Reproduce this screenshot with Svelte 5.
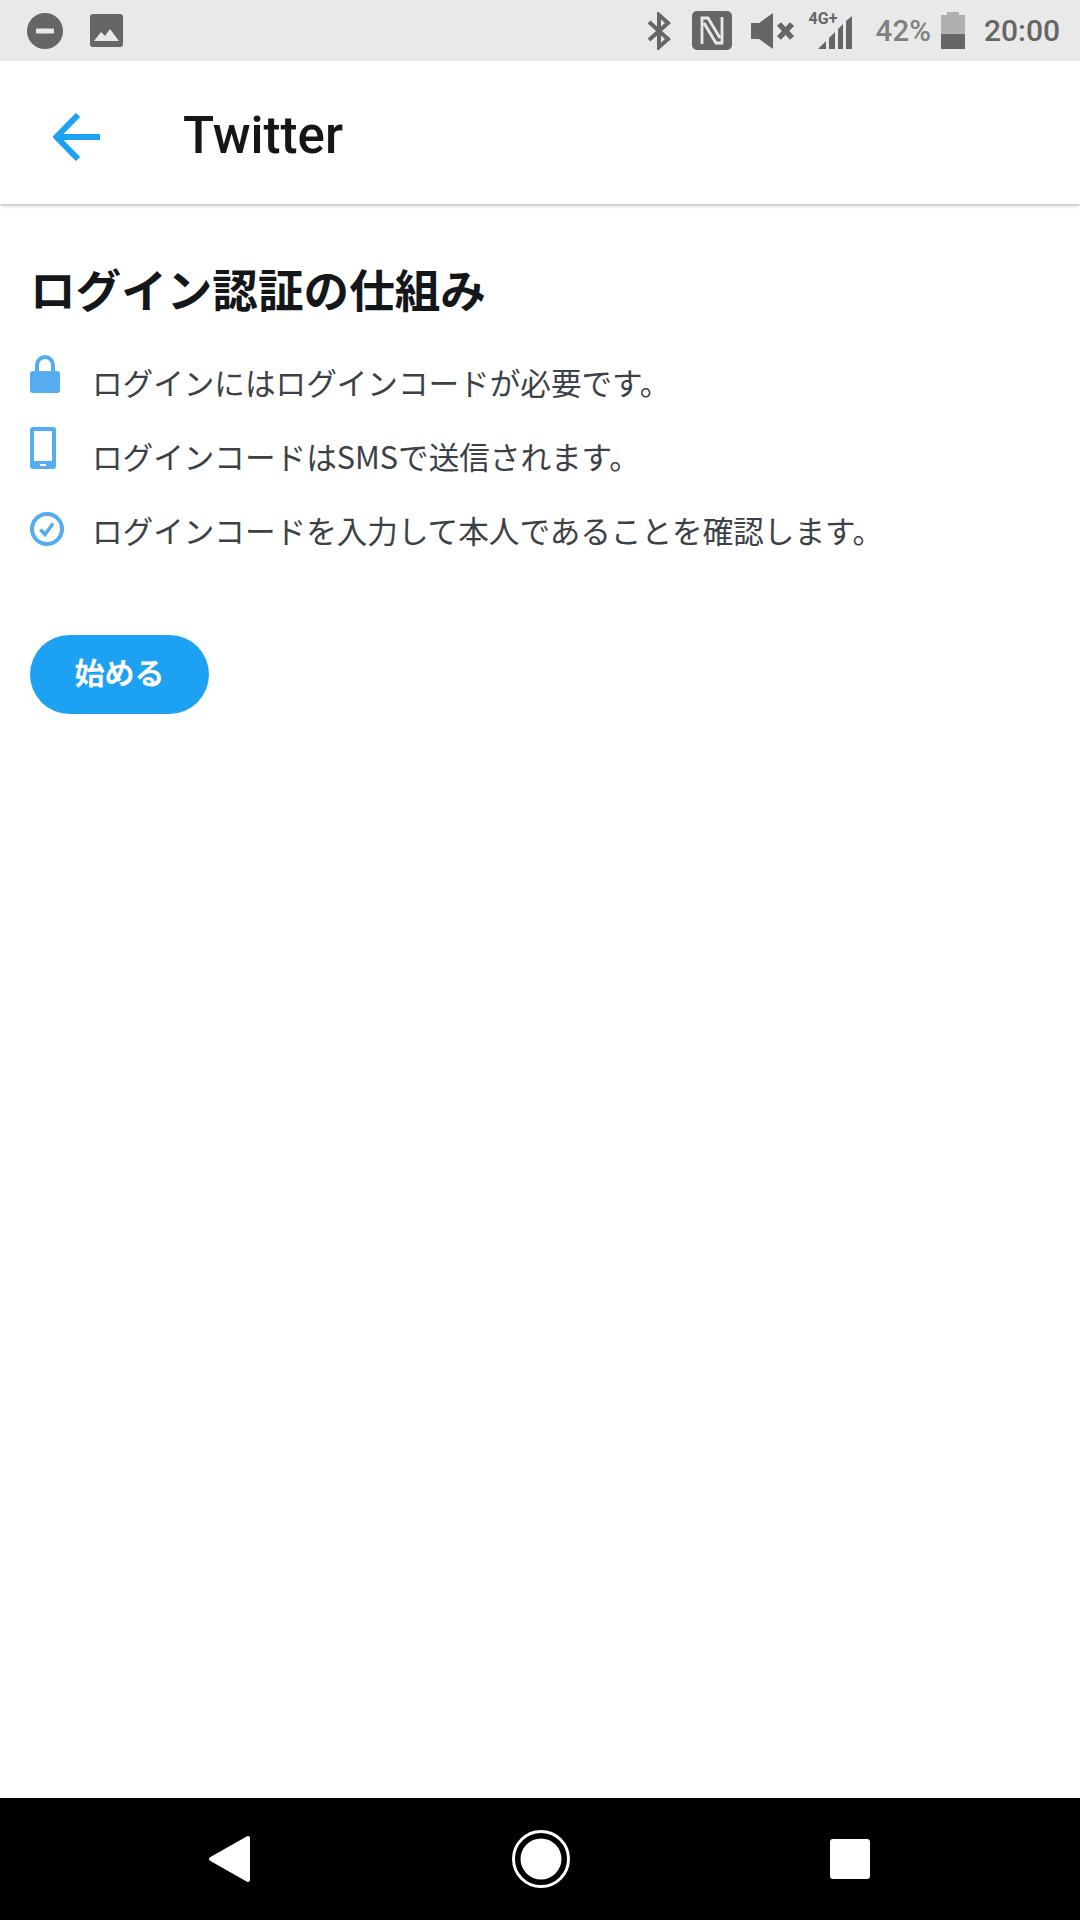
<script lang="ts">
  const steps = [
    { icon: 'lock', text: 'ログインにはログインコードが必要です。' },
    { icon: 'phone', text: 'ログインコードはSMSで送信されます。' },
    { icon: 'check', text: 'ログインコードを入力して本人であることを確認します。' }
  ];
</script>

<div class="screen">
  <div class="status">
    <div class="status-left">
      <svg width="36" height="36" viewBox="0 0 36 36"><circle cx="18" cy="18" r="18" fill="#666" /><rect x="9" y="15.5" width="18" height="5" rx="1" fill="#e9e9e9" /></svg>
      <svg width="33" height="33" viewBox="0 0 33 33"><rect width="33" height="33" rx="3" fill="#666" /><path d="M4 27 L11 18 L15 22 L20 15 L29 27Z" fill="#e9e9e9" /></svg>
    </div>
    <div class="status-right">
      <svg class="bt" width="24" height="38" viewBox="0 0 24 38" fill="none" stroke="#666" stroke-width="4"><path d="M2 10 L21 27 L12 35 V3 L21 11 L2 28" /></svg>
      <svg class="nfc" width="40" height="39" viewBox="0 0 40 39"><rect width="40" height="39" rx="5" fill="#666" /><path d="M10 33 V7 H16 L28 27 M30 6 V32 H24 L12 12" fill="none" stroke="#e9e9e9" stroke-width="2.8" /></svg>
      <svg class="sound" width="43" height="36" viewBox="0 0 43 36"><path d="M0 10 H8 L22 0 V36 L8 26 H0Z" fill="#666" /><path d="M28 11 L41 25 M41 11 L28 25" stroke="#666" stroke-width="5.500" /></svg>
      <div class="signal">
        <span class="net">4G+</span>
        <svg width="34" height="33" viewBox="0 0 34 33"><path d="M0 33 L8 25 V33Z M11 33 V22 L17 16 V33Z M20 33 V13 L25 8 V33Z M28 33 V5 L34 0 V33Z" fill="#666" /></svg>
      </div>
      <span class="percent">42%</span>
      <div class="battery"><span class="cap"></span><span class="cell"><span class="level"></span></span></div>
      <span class="clock">20:00</span>
    </div>
  </div>

  <header class="topbar">
    <svg class="back" width="48" height="48" viewBox="0 0 48 48" fill="none" stroke="#1da1f2" stroke-width="6"><path d="M47 24 H3 M25 2 L3.500 24 L25 46" /></svg>
    <h1>Twitter</h1>
  </header>

  <main class="content">
    <h2>ログイン認証の仕組み</h2>
    <ul>
      {#each steps as step}
        <li>
          <span class="icon {step.icon}">
            {#if step.icon === 'lock'}
              <svg width="30" height="38" viewBox="0 0 30 38"><path d="M7 18 V10 a8 8 0 0 1 16 0 V18" fill="none" stroke="#55acee" stroke-width="4" /><rect y="16" width="30" height="22" rx="3" fill="#55acee" /></svg>
            {:else if step.icon === 'phone'}
              <svg width="26" height="42" viewBox="0 0 26 42"><path fill-rule="evenodd" d="M3 0 H23 a3 3 0 0 1 3 3 V39 a3 3 0 0 1 -3 3 H3 a3 3 0 0 1 -3 -3 V3 a3 3 0 0 1 3 -3Z M4 4 V34 H22 V4Z M10 37 V39 H16 V37Z" fill="#55acee" /></svg>
            {:else}
              <svg width="34" height="34" viewBox="0 0 34 34" fill="none" stroke="#55acee"><circle cx="17" cy="17" r="15" stroke-width="4" /><path d="M10.500 17.500 L15 22.500 L23 11.500" stroke-width="3.500" /></svg>
            {/if}
          </span>
          <span class="label">{step.text}</span>
        </li>
      {/each}
    </ul>
    <button>始める</button>
  </main>

  <nav class="navbar">
    <svg width="44" height="48" viewBox="0 0 44 48"><path d="M41 3 V45 L4 24Z" fill="#fff" stroke="#fff" stroke-width="4" stroke-linejoin="round" /></svg>
    <svg width="58" height="58" viewBox="0 0 58 58"><circle cx="29" cy="29" r="27.500" fill="none" stroke="#fff" stroke-width="3" /><circle cx="29" cy="29" r="20.500" fill="#fff" /></svg>
    <span class="square"></span>
  </nav>
</div>

<style>
  :global(body) {
    margin: 0;
    background: #fff;
  }

  .screen {
    width: 1080px;
    height: 1920px;
    display: flex;
    flex-direction: column;
    font-family: 'Noto Sans CJK JP', sans-serif;
    overflow: hidden;
  }

  .status {
    height: 61px;
    flex: none;
    background: #e9e9e9;
    display: flex;
    align-items: center;
    justify-content: space-between;
    padding: 0 20px 0 27px;
    font-family: Roboto, sans-serif;
    position: relative;
    z-index: 1;
  }

  .status-left {
    display: flex;
    align-items: center;
    gap: 27px;
  }

  .status-right {
    display: flex;
    align-items: center;
  }

  .bt { margin-right: 21px; }
  .nfc { margin-right: 19px; }
  .sound { margin-right: 15px; }

  .signal {
    position: relative;
    width: 43px;
    height: 36px;
    margin-right: 24px;
    display: flex;
    justify-content: flex-end;
    align-items: flex-end;
  }

  .net {
    position: absolute;
    left: 0;
    top: -2px;
    font-size: 16px;
    font-weight: 700;
    line-height: 16px;
    color: #666;
  }

  .percent {
    font-size: 29.5px;
    font-weight: 500;
    color: #808080;
    margin-right: 10px;
  }

  .battery {
    width: 24px;
    height: 37px;
    display: flex;
    flex-direction: column;
    align-items: center;
    margin-right: 19px;
  }

  .cap {
    width: 12px;
    height: 3px;
    background: #b0b0b0;
  }

  .cell {
    flex: 1;
    width: 100%;
    background: #b0b0b0;
    display: flex;
    align-items: flex-end;
  }

  .level {
    width: 100%;
    height: 15px;
    background: #666;
  }

  .clock {
    font-size: 30px;
    font-weight: 500;
    color: #666;
  }

  .topbar {
    height: 143px;
    flex: none;
    display: flex;
    align-items: center;
    padding-left: 53px;
    box-shadow: 0 1px 4px rgba(0, 0, 0, 0.35);
    position: relative;
  }

  .back {
    margin-top: 9px;
  }

  h1 {
    margin: 6px 0 0 82px;
    font-family: Roboto, sans-serif;
    font-size: 51px;
    font-weight: 500;
    color: #14171a;
  }

  .content {
    flex: 1;
    padding: 52px 30px 0;
  }

  h2 {
    margin: 0;
    font-size: 45.6px;
    font-weight: 700;
    line-height: 64px;
    color: #14171a;
  }

  ul {
    list-style: none;
    margin: 37px 0 0;
    padding: 0;
    display: flex;
    flex-direction: column;
    gap: 24px;
  }

  li {
    height: 50px;
    display: flex;
    align-items: center;
  }

  .icon {
    width: 62px;
    flex: none;
    display: flex;
    margin-top: -17px;
  }

  .icon.check {
    margin-top: -3px;
  }

  .label {
    font-size: 30.6px;
    color: #3c4147;
    line-height: 50px;
  }

  button {
    display: block;
    margin-top: 80px;
    width: 179px;
    height: 79px;
    padding: 0 0 8px;
    border: 0;
    border-radius: 40px;
    background: #1da1f2;
    color: #fff;
    font: 700 30px 'Noto Sans CJK JP', sans-serif;
  }

  .navbar {
    height: 122px;
    flex: none;
    background: #000;
    display: flex;
    align-items: center;
    padding: 0 210px 0 207px;
    justify-content: space-between;
  }

  .square {
    width: 40px;
    height: 40px;
    border-radius: 3px;
    background: #fff;
  }
</style>
